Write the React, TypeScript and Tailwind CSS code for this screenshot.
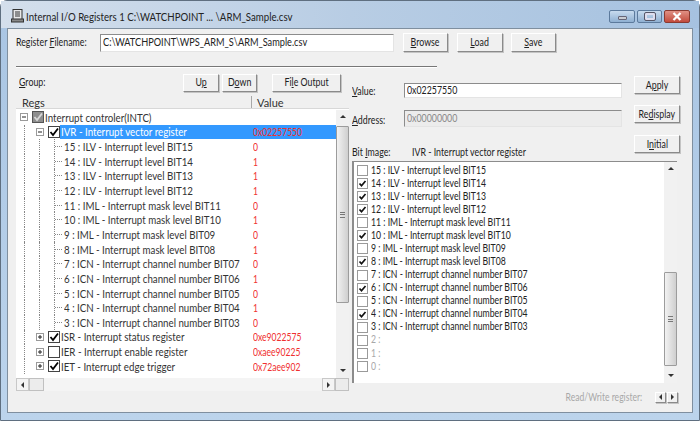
import React from "react";

const raised = "border border-t-white border-l-white border-r-[#8a8a8a] border-b-[#8a8a8a] shadow-[1px_1px_0_#c4c4c4] bg-[#f0f0f0] flex items-center justify-center text-[11px] text-[#222] shrink-0";
const sunken = "border border-t-[#8c8c8c] border-l-[#8c8c8c] border-r-[#e4e4e4] border-b-[#e4e4e4] flex items-center px-[2px] text-[11px] whitespace-nowrap";
const slim = "inline-block origin-left scale-x-[.8] whitespace-nowrap";

function Btn({ w, h = "h-[19px]", pre, u, post, cls = "" }: { w: string; h?: string; pre?: string; u: string; post?: string; cls?: string }) {
  return (
    <div className={`${raised} ${w} ${h} ${cls}`}>
      <span className="inline-block scale-x-[.8] whitespace-nowrap">
        {pre}
        <span className="underline">{u}</span>
        {post}
      </span>
    </div>
  );
}

function Check({ on, dim, size = "big" }: { on?: boolean; dim?: boolean; size?: string }) {
  if (size === "small") {
    return (
      <svg width="11" height="11" viewBox="0 0 11 11" className="shrink-0">
        <rect x="0.5" y="0.5" width="10" height="10" fill="#fff" stroke="#9a9a9a" />
        {on && <path d="M2.5 5.5 L4.5 7.8 L8.5 3" fill="none" stroke="#111" strokeWidth="1.7" />}
      </svg>
    );
  }
  return (
    <svg width="12" height="12" viewBox="0 0 12 12" className="shrink-0">
      <rect x="0.5" y="0.5" width="11" height="11" fill={dim ? "#8e8e8e" : "#fff"} stroke={dim ? "#555" : "#444"} />
      {on && <path d="M2.5 6 L5 9 L10 2.5" fill="none" stroke={dim ? "#d8d8d8" : "#000"} strokeWidth="1.8" />}
    </svg>
  );
}

function Expander({ open }: { open?: boolean }) {
  return (
    <svg width="8" height="8" viewBox="0 0 8 8" className="shrink-0 bg-white">
      <rect x="0.5" y="0.5" width="7" height="7" fill="#fff" stroke="#9a9a9a" />
      <path d={open ? "M2 4H6" : "M2 4H6M4 2V6"} stroke="#222" />
    </svg>
  );
}

const bits: [string, string, number][] = [
  ["15", "ILV - Interrupt level BIT15", 0],
  ["14", "ILV - Interrupt level BIT14", 1],
  ["13", "ILV - Interrupt level BIT13", 1],
  ["12", "ILV - Interrupt level BIT12", 1],
  ["11", "IML - Interrupt mask level BIT11", 0],
  ["10", "IML - Interrupt mask level BIT10", 1],
  ["9", "IML - Interrupt mask level BIT09", 0],
  ["8", "IML - Interrupt mask level BIT08", 1],
  ["7", "ICN - Interrupt channel number BIT07", 0],
  ["6", "ICN - Interrupt channel number BIT06", 1],
  ["5", "ICN - Interrupt channel number BIT05", 0],
  ["4", "ICN - Interrupt channel number BIT04", 1],
  ["3", "ICN - Interrupt channel number BIT03", 0],
];

const rowCls = "flex items-center h-[14.65px] text-[11px] text-[#333] leading-none whitespace-nowrap";
const vline = "self-stretch border-l border-dotted border-[#888] shrink-0";
const treeText = "inline-block origin-left scale-x-[.884] whitespace-nowrap";

function Val({ v }: { v: string | number }) {
  return <span className="absolute left-[237px] text-[#f03030] origin-left scale-x-[.78]">{v}</span>;
}

function TreeRows() {
  return (
    <div className="flex-1 min-w-0">
      <div className={`${rowCls} relative`}>
        <span className="w-[4px]" />
        <Expander open />
        <span className="w-[4px]" />
        <Check on dim />
        <span className={`ml-[1px] ${treeText}`}>Interrupt controler(INTC)</span>
      </div>
      <div className={`${rowCls} relative`}>
        <span className="w-[8px] shrink-0" />
        <span className={`${vline} w-[12px]`} />
        <Expander open />
        <span className="w-[4px] shrink-0" />
        <Check on />
        <span className="flex-1 bg-[#3399ff] text-white h-full flex items-center pl-[1px]">
          <span className={treeText}>IVR - Interrupt vector register</span>
        </span>
        <Val v="0x02257550" />
      </div>
      {bits.map(([n, t, v]) => (
        <div key={n} className={`${rowCls} relative`}>
          <span className="w-[8px] shrink-0" />
          <span className={`${vline} w-[15px]`} />
          <span className={`${vline} w-[15px]`} />
          <span className={`${vline} w-[10px] flex items-center`}>
            <span className="w-[7px] border-t border-dotted border-[#888]" />
          </span>
          <span className={treeText}>{n} : {t}</span>
          <Val v={v} />
        </div>
      ))}
      {[
        ["ISR - Interrupt status register", "0xe9022575", true],
        ["IER - Interrupt enable register", "0xaee90225", false],
        ["IET - Interrupt edge trigger", "0x72aee902", true],
      ].map(([t, v, on]) => (
        <div key={t as string} className={`${rowCls} relative`}>
          <span className="w-[8px] shrink-0" />
          <span className={`${vline} w-[12px]`} />
          <Expander />
          <span className="w-[4px] shrink-0" />
          <Check on={on as boolean} />
          <span className={`ml-[1px] ${treeText}`}>{t as string}</span>
          <Val v={v as string} />
        </div>
      ))}
    </div>
  );
}

function Arrow({ d }: { d: "up" | "down" | "left" | "right" }) {
  const p = { up: "M0 4 L3 1 L6 4Z", down: "M0 1 L6 1 L3 4Z", left: "M4 0 L4 6 L1 3Z", right: "M1 0 L1 6 L4 3Z" }[d];
  return (
    <svg width="6" height="6" viewBox="0 0 6 6">
      <path d={p} fill="#333" />
    </svg>
  );
}

function VBar({ before, thumb }: { before: string; thumb: string }) {
  return (
    <div className="w-[13px] shrink-0 bg-[#f1f1f1] flex flex-col items-stretch">
      <div className="h-[14px] flex items-center justify-center"><Arrow d="up" /></div>
      <div className={before} />
      <div className={`${thumb} rounded-[1px] border border-[#9c9c9c] bg-gradient-to-r from-[#f2f2f2] to-[#cfcfcf] flex items-center justify-center`}>
        <div className="w-[5px] h-[6px] border-y border-[#777] flex items-center"><div className="w-full border-t border-[#777]" /></div>
      </div>
      <div className="flex-1" />
      <div className="h-[14px] flex items-center justify-center"><Arrow d="down" /></div>
    </div>
  );
}

export default function App() {
  return (
    <div className="w-[700px] h-[421px] bg-white overflow-hidden font-['Lato',sans-serif]">
      <div className="h-[421px] rounded-t-[7px] border border-[#5f6f80] flex flex-col bg-gradient-to-b from-[#a9c5e3] to-[#bcd4ec]">
        {/* title bar */}
        <div className="h-[27px] shrink-0 flex items-center pl-[10px] pr-[9px] bg-gradient-to-r from-[#d4dfec] via-[#b8cde4] to-[#a6c2e0]">
          <svg width="13" height="14" viewBox="0 0 13 14" className="shrink-0 mt-[2px]">
            <rect x="2" y="0.5" width="9" height="12" fill="#e8e8e8" stroke="#333" />
            <path d="M4 3H9M4 5H9M4 7H9" stroke="#333" />
            <rect x="0.5" y="10" width="12" height="3" fill="#888" stroke="#333" />
          </svg>
          <span className="ml-[2px] mt-[5px] text-[11px] text-[#222] inline-block origin-left scale-x-[.878] whitespace-nowrap">Internal I/O Registers 1 C:\WATCHPOINT ... \ARM_Sample.csv</span>
          <div className="flex-1" />
          <div className="flex gap-[2px] items-center self-start mt-[9px]">
            <div className="w-[26px] h-[13px] rounded-[2px] border border-[#5c7a9c] bg-gradient-to-b from-[#c8dbee] to-[#8fb0d2] flex items-end justify-center pb-[2px]">
              <span className="w-[9px] h-[4px] rounded-[1px] bg-[#c8ccd2] border border-[#667]" />
            </div>
            <div className="w-[25px] h-[13px] rounded-[2px] border border-[#5c7a9c] bg-gradient-to-b from-[#c8dbee] to-[#8fb0d2] flex items-center justify-center">
              <span className="w-[10px] h-[7px] rounded-[1px] border-2 border-[#dde] outline outline-1 outline-[#556]" />
            </div>
            <div className="w-[26px] h-[13px] rounded-[2px] border border-[#8a3a30] bg-gradient-to-b from-[#e09084] to-[#c24a3c] flex items-center justify-center">
              <svg width="10" height="9" viewBox="0 0 10 9"><path d="M1.5 1 L8.5 8 M8.5 1 L1.5 8" stroke="#fff" strokeWidth="2.2" /></svg>
            </div>
          </div>
        </div>

        {/* client */}
        <div className="flex-1 mx-[6px] mb-[7px] bg-[#f0f0f0] border border-[#7f8f9f] text-[11px] text-[#222] flex flex-col min-h-0">
          {/* file row */}
          <div className="flex items-center pl-[8px] pt-[4px] h-[23px] shrink-0">
            <span className="w-[84px] shrink-0"><span className={slim}>Register <span className="underline">F</span>ilename:</span></span>
            <div className={`${sunken} bg-white w-[294px] h-[18px] text-[#222]`}><span className="inline-block origin-left scale-x-[.836]">C:\WATCHPOINT\WPS_ARM_S\ARM_Sample.csv</span></div>
            <Btn w="w-[45px]" cls="ml-[9px]" u="B" post="rowse" />
            <Btn w="w-[46px]" cls="ml-[9px]" u="L" post="oad" />
            <Btn w="w-[45px]" cls="ml-[8px]" u="S" post="ave" />
          </div>
          <div className="ml-[8px] mt-[14px] w-[421px] h-[2px] bg-[#777] border-b border-white shrink-0" />

          <div className="flex flex-1 min-h-0">
            {/* left pane */}
            <div className="w-[333px] ml-[8px] shrink-0 flex flex-col">
              <div className="flex items-center mt-[5px] h-[19px] shrink-0">
                <span className="ml-[3px] w-[164px] shrink-0"><span className={slim}><span className="underline">G</span>roup:</span></span>
                <Btn w="w-[36px]" h="h-[18px]" pre="U" u="p" />
                <Btn w="w-[35px]" h="h-[18px]" cls="ml-[3px]" pre="D" u="o" post="wn" />
                <Btn w="w-[69px]" h="h-[18px]" cls="ml-[15px]" pre="Fi" u="l" post="e Output" />
              </div>
              <div className="flex h-[13px] mt-[4px] shrink-0 border-b border-[#d8d8d8] text-[11px] leading-[13px] text-[#333]">
                <span className="w-[236px] pl-[6px] border-r border-[#a8a8a8]">Regs</span>
                <span className="pl-[5px]">Value</span>
              </div>
              <div className="flex h-[269px] bg-white overflow-hidden shrink-0 pt-[1px]">
                <TreeRows />
                <VBar before="h-[2px]" thumb="h-[177px]" />
              </div>
              <div className="h-[13px] shrink-0 bg-[#f4f4f4] flex items-center justify-between">
                <div className="flex h-full">
                  <div className="w-[13px] border border-[#c8c8c8] flex items-center justify-center"><Arrow d="left" /></div>
                  <div className="w-[15px] border border-[#c0c0c0] bg-[#ececec]" />
                </div>
                <div className="flex h-full">
                  <div className="w-[13px] border border-[#c8c8c8] flex items-center justify-center"><Arrow d="right" /></div>
                  <div className="w-[14px] border border-[#c0c0c0] bg-[#ececec]" />
                </div>
              </div>
            </div>

            {/* right pane */}
            <div className="flex-1 ml-[3px] mr-[6px] flex flex-col -mt-[2px] min-w-0">
              <div className="flex items-start h-[30px] mt-[12px] shrink-0">
                <span className="w-[52px] pt-[5px]"><span className={slim}><span className="underline">V</span>alue:</span></span>
                <div className={`${sunken} bg-white w-[218px] h-[15px] mt-[5px] text-[#222]`}><span className={slim}>0x02257550</span></div>
                <Btn w="w-[46px]" h="h-[18px]" cls="ml-[12px] -mt-[2px]" pre="A" u="p" post="ply" />
              </div>
              <div className="flex items-start h-[30px] shrink-0">
                <span className="w-[52px] pt-[4px]"><span className={slim}><span className="underline">A</span>ddress:</span></span>
                <div className={`${sunken} bg-[#ececec] w-[218px] h-[17px] mt-[2px] text-[#8a8a8a]`}><span className={slim}>0x00000000</span></div>
                <Btn w="w-[46px]" h="h-[18px]" cls="ml-[12px] -mt-[3px]" pre="Re" u="d" post="isplay" />
              </div>
              <div className="flex items-start h-[23px] shrink-0">
                <span className="w-[52px] pt-[6px]"><span className={slim}>Bit <span className="underline">I</span>mage:</span></span>
                <span className="w-[218px] pt-[6px] pl-[8px]"><span className={slim}>IVR - Interrupt vector register</span></span>
                <Btn w="w-[46px]" h="h-[18px]" cls="ml-[12px] -mt-[3px]" pre="I" u="n" post="itial" />
              </div>
              <div className="h-[222px] w-[325px] shrink-0 bg-white flex border-l-2 border-t border-[#8c8c8c]">
                <div className="flex-1 min-w-0 pt-[2px] pl-[3px]">
                  {bits.map(([n, t, v]) => (
                    <div key={n} className="flex items-center h-[13.07px] text-[10.5px] text-[#222]">
                      <Check size="small" on={v === 1} />
                      <span className="ml-[3px] inline-block origin-left scale-x-[.825] whitespace-nowrap">{n} : {t}</span>
                    </div>
                  ))}
                  {["2", "1", "0"].map((n) => (
                    <div key={n} className="flex items-center h-[13.07px] text-[10.5px] text-[#a8a8a8]">
                      <Check size="small" />
                      <span className="ml-[3px] inline-block origin-left scale-x-[.825] whitespace-nowrap">{n} :</span>
                    </div>
                  ))}
                </div>
                <VBar before="h-[96px]" thumb="h-[94px]" />
              </div>
              <div className="flex items-center justify-end h-[24px] mt-[2px] w-[326px] shrink-0 text-[#a8a8a8]">
                <span className="inline-block origin-right scale-x-[.78] whitespace-nowrap">Read/Write register:</span>
                <div className="ml-[13px] flex gap-[1px]">
                  <div className={`${raised} w-[11px] h-[11px]`}><Arrow d="left" /></div>
                  <div className={`${raised} w-[11px] h-[11px]`}><Arrow d="right" /></div>
                </div>
              </div>
            </div>
          </div>
        </div>
      </div>
    </div>
  );
}
